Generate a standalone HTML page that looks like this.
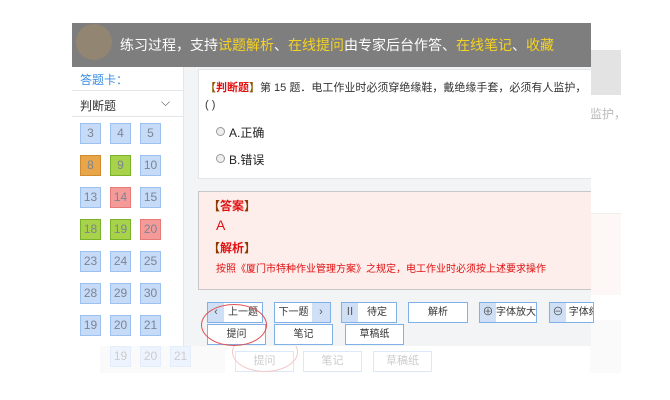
<!DOCTYPE html><html><head><meta charset="utf-8"><style>
*{margin:0;padding:0;box-sizing:border-box}
body{width:670px;height:400px;background:#fff;position:relative;overflow:hidden;font-family:"Liberation Sans","Noto Sans CJK SC",sans-serif}
.a{position:absolute}
.c{position:absolute;width:21px;height:21px;background:#c6dbf7;border:1px solid #9cc0f0;color:#7b8594;font-size:12px;text-align:center;line-height:19px}
.o{background:#e8a54a;border-color:#d08a30}.g{background:#a7d24a;border-color:#7bb22c}.r{background:#f49a98;border-color:#e57a78}
.b{position:absolute;height:21px;border:1px solid #7fb0e8;background:#fff;font-size:11px;color:#333;text-align:center;line-height:19px;white-space:nowrap;overflow:hidden}
.i{position:absolute;top:0;bottom:0;width:16px;background:#cfe0f6;color:#555;line-height:19px;font-size:11px;text-align:center}
</style></head><body>
<!-- faded background layer -->
<div class="a" style="left:590px;top:50px;width:31px;height:45px;background:#e3e3e3"></div>
<div class="a" style="left:590px;top:105px;font-size:12px;color:#bbb">监护，</div>
<div class="a" style="left:590px;top:213px;width:31px;height:82px;background:#fdf7f6;border-top:1px solid #eee"></div>
<div class="a" style="left:590px;top:320px;width:31px;height:53px;background:#fafafa"></div>
<div class="a" style="left:100px;top:345px;width:125px;height:28px;background:#fafafa"></div>
<div class="c" style="left:110px;top:346px;background:#eef4fd;border-color:#e3edfb;color:#ccc">19</div>
<div class="c" style="left:140px;top:346px;background:#eef4fd;border-color:#e3edfb;color:#ccc">20</div>
<div class="c" style="left:170px;top:346px;background:#eef4fd;border-color:#e3edfb;color:#ccc">21</div>
<div class="b" style="left:235px;top:351px;width:59px;border-color:#dbe8f8;color:#ccc">提问</div>
<div class="b" style="left:303px;top:351px;width:59px;border-color:#dbe8f8;color:#ccc">笔记</div>
<div class="b" style="left:373px;top:351px;width:59px;border-color:#dbe8f8;color:#ccc">草稿纸</div>
<div class="a" style="left:232px;top:332px;width:66px;height:40px;border:1px solid #f4c6c6;border-radius:50%"></div>

<!-- main panel -->
<div class="a" style="left:72px;top:23px;width:519px;height:323px;background:#f3f4f6"></div>
<div class="a" style="left:72px;top:67px;width:112px;height:279px;background:#fff;border-right:1px solid #e4e6ea"></div>
<div class="a" style="left:72px;top:23px;width:519px;height:44px;background:#7e7e7e"></div>
<div class="a" style="left:76px;top:24px;width:36px;height:36px;border-radius:50%;background:#a08a6a;opacity:.6"></div>
<div class="a" style="left:120px;top:35px;font-size:14px;color:#fff;white-space:nowrap">练习过程，支持<span style="color:#f5d324">试题解析</span>、<span style="color:#f5d324">在线提问</span>由专家后台作答、<span style="color:#f5d324">在线笔记</span>、<span style="color:#f5d324">收藏</span></div>
<div class="a" style="left:80px;top:71px;font-size:12px;color:#3a8ee6">答题卡：</div>
<div class="a" style="left:72px;top:90px;width:112px;height:1px;background:#e4e6ea"></div>
<div class="a" style="left:80px;top:97px;font-size:12px;color:#333">判断题</div>
<div class="a" style="left:161px;top:95px;font-size:12px;color:#555">⌵</div>
<div class="a" style="left:72px;top:116px;width:112px;height:1px;background:#e4e6ea"></div>
<div class="c" style="left:80px;top:123px">3</div><div class="c" style="left:110px;top:123px">4</div><div class="c" style="left:140px;top:123px">5</div>
<div class="c o" style="left:80px;top:155px">8</div><div class="c g" style="left:110px;top:155px">9</div><div class="c" style="left:140px;top:155px">10</div>
<div class="c" style="left:80px;top:187px">13</div><div class="c r" style="left:110px;top:187px">14</div><div class="c" style="left:140px;top:187px">15</div>
<div class="c g" style="left:80px;top:219px">18</div><div class="c g" style="left:110px;top:219px">19</div><div class="c r" style="left:140px;top:219px">20</div>
<div class="c" style="left:80px;top:251px">23</div><div class="c" style="left:110px;top:251px">24</div><div class="c" style="left:140px;top:251px">25</div>
<div class="c" style="left:80px;top:283px">28</div><div class="c" style="left:110px;top:283px">29</div><div class="c" style="left:140px;top:283px">30</div>
<div class="c" style="left:80px;top:315px">19</div><div class="c" style="left:110px;top:315px">20</div><div class="c" style="left:140px;top:315px">21</div>

<div class="a" style="left:198px;top:69px;width:393px;height:110px;background:#fff;border:1px solid #e4e6ea;border-right:none"></div>
<div class="a" style="left:205px;top:79px;font-size:11px;color:#333;white-space:nowrap"><b style="color:#8a5a00">【<span style="color:#e01010">判断题</span>】</b>第 15 题．电工作业时必须穿绝缘鞋，戴绝缘手套，必须有人监护，</div>
<div class="a" style="left:205px;top:99px;font-size:11px;color:#333">( )</div>
<div class="a" style="left:216px;top:127px;width:9px;height:9px;border-radius:50%;border:1px solid #999;background:#eee"></div>
<div class="a" style="left:229px;top:124px;font-size:12px;color:#222">A.正确</div>
<div class="a" style="left:216px;top:154px;width:9px;height:9px;border-radius:50%;border:1px solid #999;background:#eee"></div>
<div class="a" style="left:229px;top:151px;font-size:12px;color:#222">B.错误</div>

<div class="a" style="left:198px;top:191px;width:393px;height:99px;background:#fdeeec;border:1px solid #c8c8c8;border-right:none"></div>
<div class="a" style="left:208px;top:197px;font-size:12px;font-weight:bold;color:#8a3a00">【<span style="color:#e01010">答案</span>】</div>
<div class="a" style="left:216px;top:217px;font-size:14px;color:#e01010">A</div>
<div class="a" style="left:208px;top:239px;font-size:12px;font-weight:bold;color:#8a3a00">【<span style="color:#e01010">解析</span>】</div>
<div class="a" style="left:216px;top:260px;font-size:10px;color:#e01010;white-space:nowrap">按照《厦门市特种作业管理方案》之规定，电工作业时必须按上述要求操作</div>

<div class="b" style="left:207px;top:302px;width:56px;padding-left:16px;font-size:10px"><span class="i" style="left:0">‹</span>上一题</div>
<div class="b" style="left:274px;top:302px;width:57px;padding-right:18px;font-size:10px"><span class="i" style="right:0;width:18px">›</span>下一题</div>
<div class="b" style="left:341px;top:302px;width:56px;padding-left:16px;font-size:10px"><span class="i" style="left:0">Ⅱ</span>待定</div>
<div class="b" style="left:408px;top:302px;width:60px;font-size:10px">解析</div>
<div class="b" style="left:479px;top:302px;width:58px;padding-left:16px;font-size:10px"><span class="i" style="left:0">⊕</span>字体放大</div>
<div class="b" style="left:549px;top:302px;width:45px;padding-left:16px;text-align:left;font-size:10px"><span class="i" style="left:0">⊖</span>&nbsp;字体缩</div>
<div class="b" style="left:207px;top:324px;width:59px;font-size:10px">提问</div>
<div class="b" style="left:274px;top:324px;width:59px;font-size:10px">笔记</div>
<div class="b" style="left:345px;top:324px;width:59px;font-size:10px">草稿纸</div>
<div class="a" style="left:201px;top:304px;width:66px;height:42px;border:1px solid #e05050;border-radius:50%"></div>
<div class="a" style="left:591px;top:23px;width:79px;height:27px;background:#fff"></div>
</body></html>
